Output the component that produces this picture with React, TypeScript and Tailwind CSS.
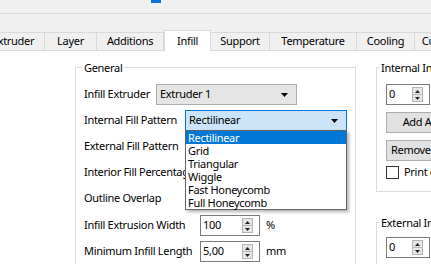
import React from 'react';

const tabs = [
  { label: 'Extruder', width: 'w-[63px]' },
  { label: 'Layer', width: 'w-[52px]' },
  { label: 'Additions', width: 'w-[67px]' },
  { label: 'Infill', width: 'w-[47px]', active: true },
  { label: 'Support', width: 'w-[59px]' },
  { label: 'Temperature', width: 'w-[87px]' },
  { label: 'Cooling', width: 'w-[58px]' },
  { label: 'Custom G-code', width: 'w-[90px]' },
];

const patterns = ['Rectilinear', 'Grid', 'Triangular', 'Wiggle', 'Fast Honeycomb', 'Full Honeycomb'];

function DownArrow() {
  return (
    <svg width="7" height="4" viewBox="0 0 7 4" className="shrink-0">
      <path d="M0 0h7L3.5 4z" fill="#000" />
    </svg>
  );
}

function Spinner() {
  return (
    <div className="flex h-[15px] w-[11px] shrink-0 flex-col border border-[#b5b5b5] bg-[#e6e6e6]">
      <div className="flex flex-1 items-center justify-center border-b border-[#b5b5b5]">
        <svg width="5" height="3" viewBox="0 0 5 3">
          <path d="M0 3h5L2.5 0z" fill="#222" />
        </svg>
      </div>
      <div className="flex flex-1 items-center justify-center">
        <svg width="5" height="3" viewBox="0 0 5 3">
          <path d="M0 0h5L2.5 3z" fill="#222" />
        </svg>
      </div>
    </div>
  );
}

function SpinBox({ value, width }: { value: string; width: string }) {
  return (
    <div className={`flex h-[21px] ${width} shrink-0 items-center border border-[#7a7a7a] bg-white pl-[2px] pr-[6px]`}>
      <span className="flex-1">{value}</span>
      <Spinner />
    </div>
  );
}

function GroupBox({ title, className, children }: { title: string; className: string; children: React.ReactNode }) {
  return (
    <fieldset className={`shrink-0 border border-[#dcdcdc] ${className}`}>
      <legend className="px-[2px] leading-[15px]">{title}</legend>
      {children}
    </fieldset>
  );
}

export default function App() {
  return (
    <div className="flex h-[264px] w-[431px] flex-col overflow-hidden bg-[#f0f0f0] font-['Noto_Sans',sans-serif] text-[11px] tracking-[-0.3px] text-black">
      <div className="h-[13px] shrink-0 pl-[151px]">
        <div className="h-[3px] w-[10px] bg-[#0a74da]" />
      </div>
      <div className="h-px shrink-0 bg-[#dadada]" />
      <div className="h-[16px] shrink-0" />

      <div className="ml-[-18px] flex h-[20px] shrink-0 items-end">
        {tabs.map((tab) =>
          tab.active ? (
            <div
              key={tab.label}
              className={`relative z-10 mb-[-1px] flex h-[21px] ${tab.width} shrink-0 items-center justify-center border-x border-t border-[#d9d9d9] bg-white`}
            >
              {tab.label}
            </div>
          ) : (
            <div
              key={tab.label}
              className={`flex h-[18px] ${tab.width} shrink-0 items-center justify-center border-r border-t border-[#d9d9d9]`}
            >
              {tab.label}
            </div>
          )
        )}
      </div>

      <div className="flex min-h-0 flex-1 items-start gap-[20px] border-t border-[#d9d9d9] bg-white pl-[75px] pt-[9px]">
        <GroupBox title="General" className="w-[281px] pb-[12px] pl-[8px] pt-[9px] [&>legend]:ml-[-2px]">
          <div className="flex flex-col gap-[5px]">
            <div className="flex h-[21px] items-center">
              <span className="w-[72px] shrink-0">Infill Extruder</span>
              <div className="flex h-[21px] w-[141px] items-center border border-[#adadad] bg-[#e5e5e5] pl-[3px] pr-[8px]">
                <span className="flex-1">Extruder 1</span>
                <DownArrow />
              </div>
            </div>

            <div className="flex h-[21px] items-center">
              <span className="w-[101px] shrink-0">Internal Fill Pattern</span>
              <div className="relative z-20 flex h-[21px] w-[162px] items-center border border-[#0078d7] bg-[#cce4f7] pl-[3px] pr-[8px]">
                <span className="flex-1">Rectilinear</span>
                <DownArrow />
                <div className="absolute left-[-1px] top-[19px] w-[162px] border border-[#646464] bg-white shadow-[2px_2px_3px_rgba(0,0,0,0.3)]">
                  {patterns.map((p, i) => (
                    <div
                      key={p}
                      className={`h-[13px] pl-[2px] leading-[13px] ${i === 0 ? 'bg-[#0078d7] text-white' : ''}`}
                    >
                      {p}
                    </div>
                  ))}
                </div>
              </div>
            </div>

            <div className="flex h-[21px] items-center">
              <span className="whitespace-nowrap">External Fill Pattern</span>
            </div>
            <div className="flex h-[21px] items-center">
              <span className="whitespace-nowrap">Interior Fill Percentage</span>
            </div>
            <div className="flex h-[21px] items-center">
              <span>Outline Overlap</span>
            </div>

            <div className="mt-[1px] flex h-[21px] items-center">
              <span className="w-[116px] shrink-0 whitespace-nowrap">Infill Extrusion Width</span>
              <SpinBox value="100" width="w-[60px]" />
              <span className="ml-[6px]">%</span>
            </div>
            <div className="flex h-[21px] items-center">
              <span className="w-[116px] shrink-0 whitespace-nowrap">Minimum Infill Length</span>
              <SpinBox value="5,00" width="w-[60px]" />
              <span className="ml-[6px]">mm</span>
            </div>
          </div>
        </GroupBox>

        <div className="flex shrink-0 flex-col">
          <GroupBox title="Internal Infill Areas" className="w-[140px] pb-[12px] pl-[9px] pt-[9px] [&>legend]:ml-[-7px]">
            <SpinBox value="0" width="w-[44px]" />
            <div className="mt-[7px] flex h-[21px] w-[78px] items-center justify-center whitespace-nowrap border border-[#adadad] bg-[#e1e1e1]">
              Add Area
            </div>
            <div className="mt-[7px] flex h-[21px] w-[78px] items-center justify-start whitespace-nowrap border border-[#adadad] bg-[#e1e1e1] pl-[4px]">
              Remove Area
            </div>
            <div className="mt-[5px] flex h-[13px] items-center gap-[5px]">
              <div className="h-[13px] w-[13px] shrink-0 border border-[#333] bg-white" />
              <span className="whitespace-nowrap">Print extra perimeters</span>
            </div>
          </GroupBox>

          <GroupBox title="External Infill Areas" className="mt-[23px] w-[140px] pb-[12px] pl-[9px] pt-[7px] [&>legend]:ml-[-7px]">
            <SpinBox value="0" width="w-[44px]" />
            <div className="mt-[7px] flex h-[21px] w-[78px] items-center justify-center whitespace-nowrap border border-[#adadad] bg-[#e1e1e1]">
              Add Area
            </div>
          </GroupBox>
        </div>
      </div>
    </div>
  );
}
